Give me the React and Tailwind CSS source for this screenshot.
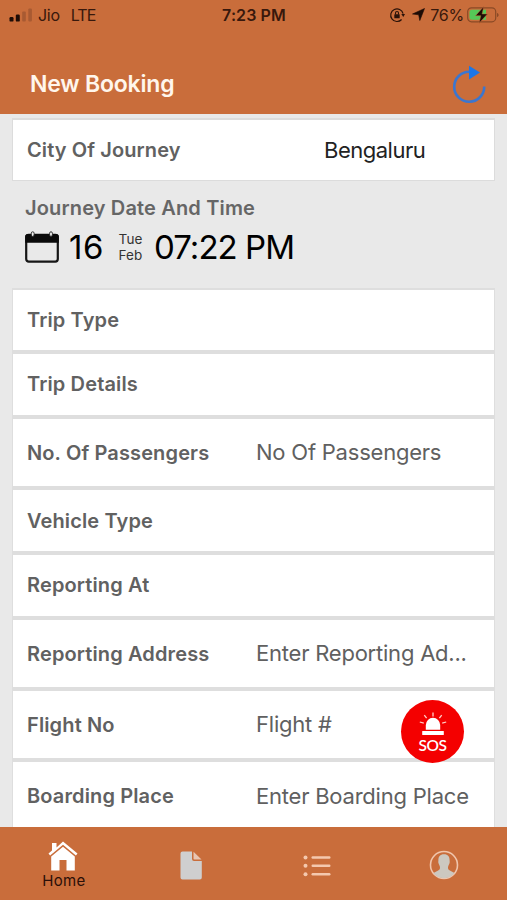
const FIELDS = [
  { label: "Trip Type", size: "h-[64px]" },
  { label: "Trip Details", size: "h-[65px] pb-px" },
  { label: "No. Of Passengers", placeholder: "No Of Passengers", size: "h-[71px]" },
  { label: "Vehicle Type", size: "h-[65px]" },
  { label: "Reporting At", size: "h-[65px] pb-px" },
  { label: "Reporting Address", placeholder: "Enter Reporting Ad...", size: "h-[71px]" },
  { label: "Flight No", placeholder: "Flight #", size: "h-[71px]" },
  { label: "Boarding Place", placeholder: "Enter Boarding Place", size: "h-[72px]" },
];

function SignalIcon() {
  return (
    <svg className="h-4 w-6" viewBox="0 0 24 16">
      <rect x="0.5" y="10" width="4" height="4.6" rx="1.2" fill="#1d0c06" />
      <rect x="6.8" y="7.5" width="4" height="7.1" rx="1.2" fill="#1d0c06" />
      <rect x="13.2" y="4.5" width="3.6" height="10.100" rx="1" fill="#a85a32" />
      <rect x="19.3" y="1.500" width="3.6" height="13.100" rx="1" fill="#a85a32" />
    </svg>
  );
}

function RotationLockIcon() {
  return (
    <svg className="h-4 w-4" viewBox="0 0 16 16" fill="none" stroke="#2a1209">
      <path d="M14.1 6.6A6.300 6.300 0 1 0 12.600 12.500" strokeWidth="1.200" />
      <path d="M12.300 7h3.700l-1.700 2.900z" fill="#2a1209" stroke="none" />
      <rect x="5.300" y="7.300" width="5.400" height="4" rx="0.500" fill="#2a1209" stroke="none" />
      <path d="M6.500 7.400V6a1.500 1.500 0 0 1 3 0v1.400" strokeWidth="1.100" />
    </svg>
  );
}

function BatteryIcon() {
  return (
    <svg className="h-[18px] w-8" viewBox="0 0 32 18">
      <rect x="0.7" y="1.800" width="28" height="14" rx="3.8" fill="none" stroke="#8a4a26" strokeWidth="1.2" />
      <path d="M5 3.800h14v10H5a2.500 2.500 0 0 1-2.500-2.500v-5A2.500 2.500 0 0 1 5 3.800z" fill="#55c957" />
      <path d="M30 7v4c1-.3 1.600-1 1.600-2S31 7.300 30 7z" fill="#8a4a26" />
      <path d="M16.800 0.500L8.500 9.700h5.300L12 17.300l8.500-9.400h-5.400z" fill="#1d0c06" stroke="#c96d3b" strokeWidth="0.500" />
    </svg>
  );
}

function StatusBar() {
  return (
    <div className="grid h-[29px] grid-cols-3 items-center pl-[9px] pr-[8px] text-[#38180c]">
      <div className="flex items-center">
        <SignalIcon />
        <span className="ml-[5px] text-base tracking-[-0.3px]">Jio</span>
        <span className="ml-[11px] text-base tracking-[-0.9px]">LTE</span>
      </div>
      <span className="text-center text-base font-semibold tracking-[0.1px]">7:23 PM</span>
      <div className="flex items-center justify-end">
        <RotationLockIcon />
        <svg className="ml-[7px] h-[13px] w-[13px]" viewBox="0 0 13 13">
          <path d="M12.500 0.500L7.800 12.500 6.700 6.800 0.500 6z" fill="#1d0c06" stroke="#1d0c06" strokeWidth="0.600" strokeLinejoin="round" />
        </svg>
        <span className="ml-[5px] text-base tracking-[-0.2px]">76%</span>
        <span className="ml-[3px]">
          <BatteryIcon />
        </span>
      </div>
    </div>
  );
}

function Header() {
  return (
    <header className="h-[114px] shrink-0 bg-[#c96d3b]">
      <StatusBar />
      <div className="flex h-[85px] items-start justify-between pl-[30px] pr-[21px] pt-[36px]">
        <h1 className="pt-[4px] text-[23px] leading-[30px] font-semibold tracking-[-0.2px] text-[#fff6ec]">New Booking</h1>
        <button type="button" aria-label="Refresh">
          <svg className="h-[39px] w-[34px]" viewBox="0 0 34 39" fill="none">
            <path d="M17.500 6.800A15 15 0 1 0 32.200 21.500" stroke="#3b76cf" strokeWidth="2.600" />
            <path d="M17 0.800L28 7.500 17 14.500z" fill="#1c76e8" />
          </svg>
        </button>
      </div>
    </header>
  );
}

function CalendarIcon() {
  return (
    <svg className="mb-[2px] h-8 w-[34px]" viewBox="0 0 34 32">
      <rect x="1.200" y="3.800" width="31.600" height="26.800" rx="2.500" fill="none" stroke="#161616" strokeWidth="2.200" />
      <path d="M0.200 5.500a2.500 2.500 0 0 1 2.500-2.500h28.600a2.500 2.500 0 0 1 2.500 2.500v6.300H0.200z" fill="#0a0a0a" />
      <rect x="6.300" y="0.800" width="2.800" height="4.600" rx="1.400" fill="#eee" stroke="#222" strokeWidth="0.900" />
      <rect x="24.600" y="0.800" width="2.800" height="4.600" rx="1.400" fill="#eee" stroke="#222" strokeWidth="0.900" />
    </svg>
  );
}

function JourneyDate() {
  return (
    <section className="h-[107px] pl-[13px] pt-[13px]">
      <h2 className="text-xl leading-[28px] font-semibold tracking-[0.15px] text-[#666]">Journey Date And Time</h2>
      <div className="flex h-[51px] items-center text-black">
        <CalendarIcon />
        <span className="ml-[10px] w-[35px] text-[33px] tracking-[0.5px]">16</span>
        <span className="mb-[2px] ml-[13px] w-[27px] text-center text-[13.5px] leading-[16px] tracking-[0.1px] text-[#333]">
          Tue
          <br />
          Feb
        </span>
        <span className="ml-[10px] text-[33px] tracking-[-0.95px] whitespace-nowrap">07:22 PM</span>
      </div>
    </section>
  );
}

function FieldRow({ label, placeholder, size }) {
  return (
    <div className={`flex shrink-0 items-center border-b-4 border-[#dedede] bg-white pl-[14px] ${size}`}>
      <span className="w-[229px] text-xl font-semibold tracking-[0.13px] text-[#616161]">{label}</span>
      {placeholder && <span className="text-[22px] tracking-[-0.22px] whitespace-nowrap text-[#606060]">{placeholder}</span>}
    </div>
  );
}

function SosButton() {
  return (
    <button
      type="button"
      className="absolute left-[401px] top-[700px] flex h-[63px] w-[63px] flex-col items-center rounded-full bg-[#f40000] pt-[12px] text-white"
    >
      <svg className="h-[24px] w-[28px]" viewBox="0 0 28 24" fill="#fff">
        <path d="M6.800 17.800V13a7.200 7.200 0 0 1 14.400 0v4.800z" />
        <rect x="3.200" y="19" width="21.600" height="4" rx="0.500" />
        <path d="M14 0.500v4M5.300 3.200l2.300 3M22.700 3.200l-2.300 3M0.800 10l4 1.200M27.200 10l-4 1.200" stroke="#ffd0c8" strokeWidth="1.300" />
      </svg>
      <span className="mt-px font-['Lato'] text-[15.5px] leading-[16px] font-semibold tracking-[-0.4px]">SOS</span>
    </button>
  );
}

function TabBar() {
  return (
    <nav className="grid h-[73px] shrink-0 grid-cols-4 bg-[#c96d3b]">
      <div className="flex flex-col items-center pt-[14px]">
        <svg className="h-[30px] w-[30px]" viewBox="0 0 30 30" fill="#fff">
          <path d="M4 2h4.500v4.500L15 0.500l14.500 12-1.600 1.900L15 3.800 2.100 14.400.5 12.500 4 9.600z" />
          <path d="M15 5.800l11.800 9.700v14h-8.300V19h-7v10.500H3.200v-14z" />
        </svg>
        <span className="pl-[1px] text-[15px] leading-[20px] tracking-[0.3px] text-[#2b0f08]">Home</span>
      </div>
      <div className="flex justify-center pl-[1px] pt-[24px]">
        <svg className="h-[29px] w-[22px]" viewBox="0 0 22 29">
          <path d="M2.500 0.500H12V8a2 2 0 0 0 2 2h7.800v16.500a2 2 0 0 1-2 2H2.500a2 2 0 0 1-2-2v-24a2 2 0 0 1 2-2z" fill="#cfcfcf" />
          <path d="M13.500 0.800L21.500 8.500h-7.200a.8.800 0 0 1-.8-.8z" fill="#e8c5b2" />
        </svg>
      </div>
      <div className="flex justify-center pt-[28px]">
        <svg className="h-[22px] w-[28px]" viewBox="0 0 28 22" fill="#f4c8ae">
          {[2.5, 10.8, 19.200].map((y) => (
            <g key={y}>
              <circle cx="2.500" cy={y} r="2" />
              <rect x="8.500" y={y - 1.200} width="19" height="2.400" rx="1.200" />
            </g>
          ))}
        </svg>
      </div>
      <div className="flex justify-center pt-[23px]">
        <svg className="h-[30px] w-[30px]" viewBox="0 0 30 30">
          <circle cx="15" cy="15" r="13.500" fill="none" stroke="#f0c5ac" strokeWidth="1.600" />
          <path
            d="M15 4.200c-4 0-5.700 2.500-5.600 6 0 1.300-.4 1.600.2 3.300.4 1.200.9 1.500 1.300 3.300.4 2-.2 3-2.200 4l-4.200 2.300A13 13 0 0 0 15 28.300a13 13 0 0 0 10.500-5.200l-4.200-2.300c-2-1-2.600-2-2.200-4 .4-1.800.9-2.100 1.300-3.300.6-1.700.2-2 .2-3.300.1-3.500-1.600-6-5.600-6z"
            fill="#ccc8c0"
          />
        </svg>
      </div>
    </nav>
  );
}

export default function App() {
  return (
    <div className="relative flex h-[900px] w-[507px] flex-col overflow-hidden bg-[#e9e9e9] font-['Inter','Liberation_Sans',sans-serif]">
      <Header />
      <main className="min-h-0 flex-1 overflow-hidden px-[12px] pt-[4px]">
        <div className="flex h-[63px] items-center border border-t-2 border-[#dcdcdc] bg-white pl-[14px]">
          <span className="w-[297px] text-xl font-semibold tracking-[0.1px] text-[#616161]">City Of Journey</span>
          <span className="text-[22px] tracking-[-0.5px] text-[#222]">Bengaluru</span>
        </div>
        <JourneyDate />
        <div className="flex flex-col border-x border-t-2 border-[#dedede]">
          {FIELDS.map((field) => (
            <FieldRow key={field.label} {...field} />
          ))}
        </div>
      </main>
      <TabBar />
      <SosButton />
    </div>
  );
}
